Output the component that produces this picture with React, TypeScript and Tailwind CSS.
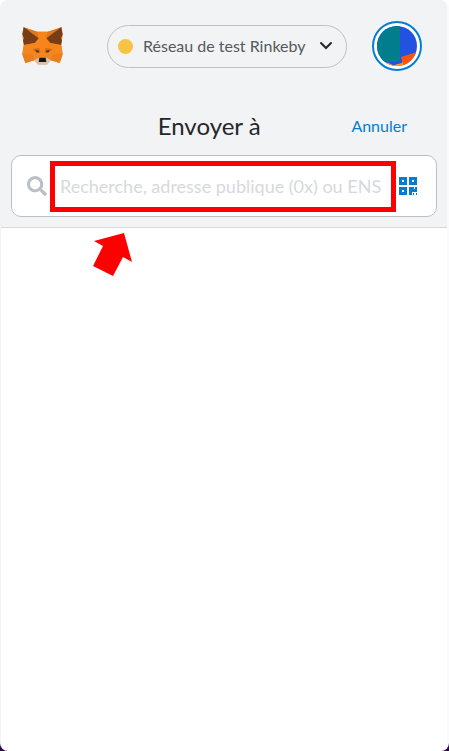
import React from 'react';
import { FaSearch } from 'react-icons/fa';

function FoxLogo() {
    return (
        <svg
            viewBox="0 0 123 117"
            className="h-[39px] w-[41px]"
            aria-hidden="true"
        >
            <path d="M5 1 40 14H83L118 1 122 24 118 52 122 82 113 108 86 100 75 112H48L37 100 10 108 1 82 5 52 1 24Z" fill="#f6851b" />
            <path d="M47 14H76L74 62H49Z" fill="#f6851b" />
            <path d="M5 1 47 14 50 32ZM118 1 76 14 73 32Z" fill="#e2761b" />
            <path d="M5 0 50 34 38 48 6 54 3 40 6 34 1 22ZM118 0 73 34 85 48 117 54 120 40 117 34 122 22Z" fill="#763d16" />
            <path d="M6 54 38 48 31 82H1ZM117 54 85 48 92 82H122Z" fill="#f6851b" />
            <path d="M1 82H31L37 100 10 108ZM122 82H92L86 100 113 108Z" fill="#ea7d1c" />
            <path d="M31 66 52 63 56 76 44 78ZM92 66 71 63 67 76 79 78Z" fill="#d5691a" />
            <path d="M31 82 52 80 49 95 37 99ZM92 82 71 80 74 95 86 99Z" fill="#f0862c" />
            <path d="M40 68 51 71 50 77 43 75ZM83 68 72 71 73 77 80 75Z" fill="#4a3a3c" />
            <path d="M37 99 50 92H73L86 99 76 113H47Z" fill="#d7c1b3" />
            <path d="M52 92H71L73 105H50Z" fill="#161616" />
        </svg>
    );
}

function AccountIcon() {
    return (
        <svg
            viewBox="0 0 40 40"
            className="size-10 rounded-full"
            aria-hidden="true"
        >
            <path d="M0 0H40V40H0Z" fill="#2352e1" />
            <path d="M0 0H23V36H0Z" fill="#017d8e" />
            <path d="M24 31 40 26V40H26Z" fill="#fb5607" />
            <path d="M6 36 12 37 17 39 26 36V40H6Z" fill="#f59a1b" />
            <path d="M10 36H22L24 31 25 37 16 39Z" fill="#2352e1" />
        </svg>
    );
}

function QrIcon() {
    return (
        <svg
            viewBox="0 0 18 18"
            className="size-[18px]"
            fill="#037dd6"
            aria-hidden="true"
        >
            <path
                fillRule="evenodd"
                d="M0 0H8V8H0ZM3 3V5H5V3ZM10 0H18V8H10ZM13 3V5H15V3ZM0 10H8V18H0ZM3 13V15H5V13Z"
            />
            <path d="M10 10H15V12H16V10H18V15H13V18H10ZM14 16H15V18H14ZM17 16H18V18H17Z" />
        </svg>
    );
}

function AppHeader() {
    return (
        <header className="flex items-center pt-[21px] pr-[25px] pl-[21px]">
            <FoxLogo />
            <button
                type="button"
                className="mr-[25px] ml-auto flex h-[43px] w-60 items-center rounded-full border border-[#bbc0c5] pr-3 pl-[10px]"
            >
                <span className="size-[15px] rounded-full bg-[#f6c343]" />
                <span className="ml-[10px] flex-1 text-left text-base whitespace-nowrap text-[#535a61]">
                    Réseau de test Rinkeby
                </span>
                <svg
                    viewBox="0 0 16 16"
                    className="size-4"
                    fill="none"
                    stroke="#24272a"
                    strokeWidth="2"
                    strokeLinecap="round"
                    aria-hidden="true"
                >
                    <path d="M3 5 8 10 13 5" />
                </svg>
            </button>
            <button
                type="button"
                aria-label="Mon compte"
                className="flex size-[50px] items-center justify-center rounded-full border-2 border-[#037dd6] bg-white"
            >
                <AccountIcon />
            </button>
        </header>
    );
}

function RecipientSearch() {
    return (
        <div className="relative mx-[10px] mt-[13px] flex h-[62px] items-center rounded-[10px] border border-[#bbc0c5] bg-white pr-[19px] pl-[15px]">
            <FaSearch className="size-5 text-[#bbc0c5]" aria-hidden="true" />
            <input
                type="text"
                aria-label="Destinataire"
                placeholder="Recherche, adresse publique (0x) ou ENS"
                className="mr-3 ml-[13px] min-w-0 flex-1 bg-transparent text-lg outline-none placeholder:text-[#d6d9dc]"
            />
            <button type="button" aria-label="Scanner le code QR">
                <QrIcon />
            </button>

            {/* tutorial callout */}
            <div className="pointer-events-none absolute top-[5px] right-10 bottom-1 left-[38px] border-5 border-[#ff0000]" />
            <svg
                viewBox="0 0 40 44"
                className="pointer-events-none absolute top-[77px] left-[81px] h-11 w-10"
                aria-hidden="true"
            >
                <path
                    d="M31 0 39 29 30 24 20 43 0 33 10 13 1 8Z"
                    fill="#ff0000"
                />
            </svg>
        </div>
    );
}

export default function App() {
    return (
        <div className="min-h-screen bg-linear-to-b from-white from-50% to-[#2a0845] to-50% font-['Lato','Open_Sans',sans-serif]">
            <main className="min-h-screen overflow-hidden rounded-lg border-r-2 border-l border-[#f2f3f6] border-r-[#fafafc] bg-white">
                <div className="border-b border-[#d6d9dc] bg-[#f2f3f4] pb-[10px]">
                    <AppHeader />
                    <div className="mt-[39px] flex items-center pr-10 pl-[66px]">
                        <h1 className="flex-1 text-center text-2xl text-[#24272a]">
                            Envoyer à
                        </h1>
                        <button
                            type="button"
                            className="text-base text-[#037dd6]"
                        >
                            Annuler
                        </button>
                    </div>
                    <RecipientSearch />
                </div>
            </main>
        </div>
    );
}
